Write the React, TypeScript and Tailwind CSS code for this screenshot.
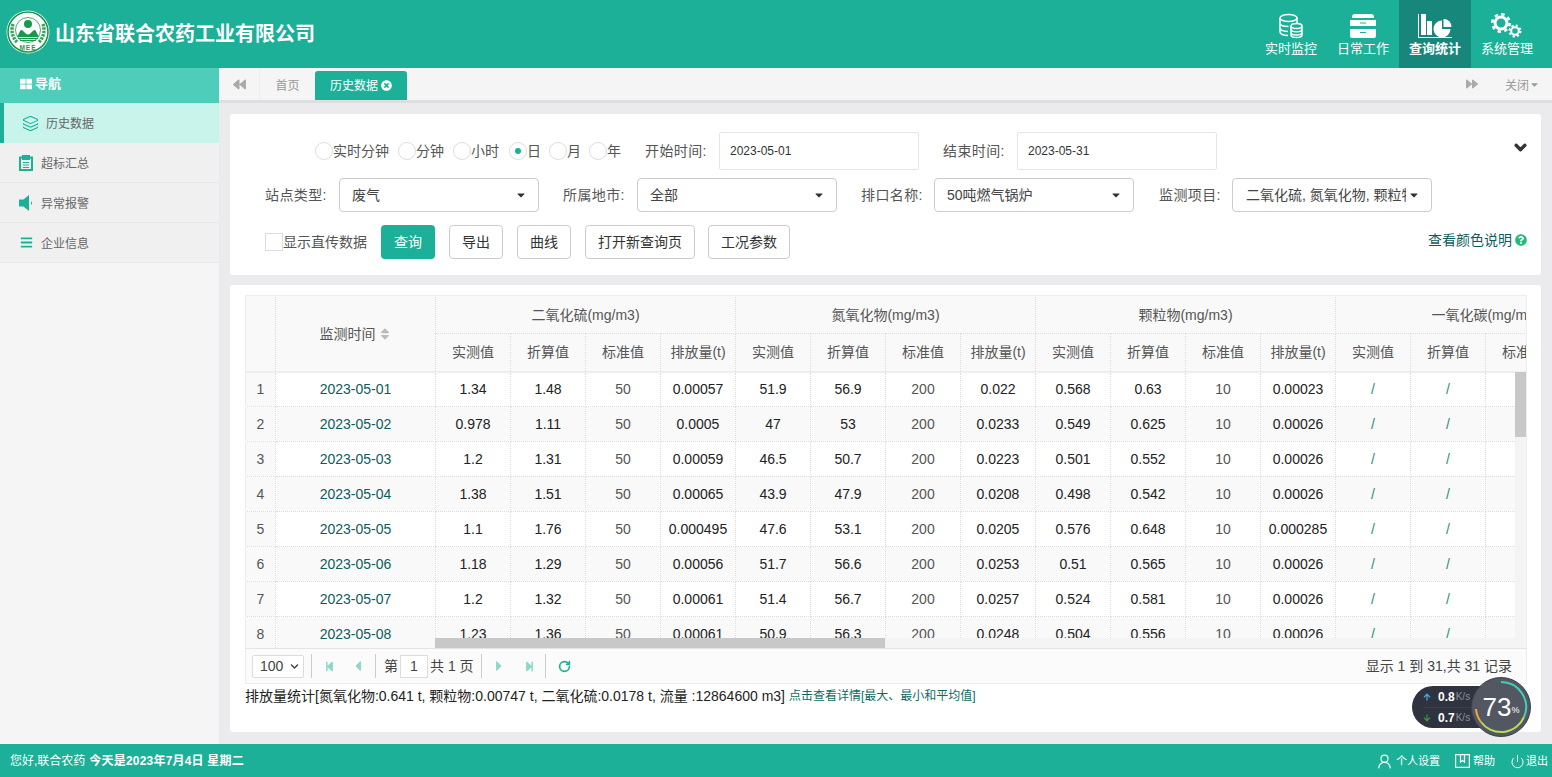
import type { ReactNode } from "react";
import { FaBackward, FaForward, FaCaretDown, FaChevronDown, FaQuestionCircle, FaTimesCircle, FaSort, FaStepBackward, FaStepForward, FaCaretLeft, FaCaretRight, FaBars, FaThLarge, FaArrowUp, FaArrowDown } from "react-icons/fa";
import { RotateCw, Layers, UserRound, Power } from "lucide-react";

const rows = [
  ["2023-05-01", "1.34", "1.48", "0.00057", "51.9", "56.9", "0.022", "0.568", "0.63", "0.00023"],
  ["2023-05-02", "0.978", "1.11", "0.0005", "47", "53", "0.0233", "0.549", "0.625", "0.00026"],
  ["2023-05-03", "1.2", "1.31", "0.00059", "46.5", "50.7", "0.0223", "0.501", "0.552", "0.00026"],
  ["2023-05-04", "1.38", "1.51", "0.00065", "43.9", "47.9", "0.0208", "0.498", "0.542", "0.00026"],
  ["2023-05-05", "1.1", "1.76", "0.000495", "47.6", "53.1", "0.0205", "0.576", "0.648", "0.000285"],
  ["2023-05-06", "1.18", "1.29", "0.00056", "51.7", "56.6", "0.0253", "0.51", "0.565", "0.00026"],
  ["2023-05-07", "1.2", "1.32", "0.00061", "51.4", "56.7", "0.0257", "0.524", "0.581", "0.00026"],
  ["2023-05-08", "1.23", "1.36", "0.00061", "50.9", "56.3", "0.0248", "0.504", "0.556", "0.00026"],
];

const groups = ["二氧化硫(mg/m3)", "氮氧化物(mg/m3)", "颗粒物(mg/m3)", "一氧化碳(mg/m3)"];
const subHeads = ["实测值", "折算值", "标准值", "排放量(t)"];

function Logo() {
  return (
    <svg width="44" height="44" viewBox="0 0 44 44" className="shrink-0 -mt-[4px]">
      <circle cx="22" cy="22" r="21.5" fill="#fff" />
      <circle cx="22" cy="22" r="20" fill="none" stroke="#189a4d" strokeWidth="1.6" />
      <circle cx="22" cy="20" r="12.500" fill="#fff" stroke="#189a4d" strokeWidth="0.8" />
      <path d="M7 14c-2 6-1 13 4 18M37 14c2 6 1 13-4 18" fill="none" stroke="#2aa75c" strokeWidth="3.4" strokeDasharray="2.4 1" />
      <circle cx="22" cy="14" r="4" fill="#189a4d" />
      <path d="M10.500 27c2-1 3-7 5-7s3.500 4.500 6.500 4.500 4.500-4.500 6.500-4.500 3 6 5 7z" fill="#189a4d" />
      <path d="M12 28.500h20M14 30.500h16" stroke="#189a4d" strokeWidth="1" />
      <text x="22" y="39.500" textAnchor="middle" fontSize="6.500" fontWeight="700" fill="#189a4d" letterSpacing="1">MEE</text>
    </svg>
  );
}

function DbIcon() {
  return (
    <svg width="26" height="26" viewBox="0 0 26 26" fill="none" stroke="#fff" strokeWidth="1.500">
      <ellipse cx="10.500" cy="5" rx="8.500" ry="3.500" />
      <path d="M2 5v14c0 2 3.500 3.500 8 3.500M2 10c0 2 3.500 3.500 8.500 3.500M2 15c0 2 3.500 3.300 8 3.400M19 5v5" />
      <ellipse cx="18.500" cy="13" rx="5.500" ry="2.500" fill="#1cb098" />
      <path d="M13 13v9c0 1.400 2.500 2.500 5.500 2.500s5.500-1.100 5.500-2.500v-9M13 16.200c0 1.400 2.500 2.500 5.500 2.500s5.500-1.100 5.500-2.500M13 19.400c0 1.400 2.500 2.500 5.500 2.500s5.500-1.100 5.500-2.500" />
    </svg>
  );
}

function DrawerIcon() {
  return (
    <svg width="26" height="24" viewBox="0 0 26 24" fill="#fff">
      <path d="M5 0h16a3 3 0 0 1 3 3v1H2V3a3 3 0 0 1 3-3z" />
      <path d="M0 6h26v6H0zM10 8.500v1h6v-1z" fillRule="evenodd" />
      <path d="M0 15h26v7a2 2 0 0 1-2 2H2a2 2 0 0 1-2-2zM10 18v1h6v-1z" fillRule="evenodd" />
    </svg>
  );
}

function ChartIcon() {
  return (
    <svg width="34" height="24" viewBox="0 0 34 24" fill="#fff">
      <path d="M0 0h1v23h33v1H0z" />
      <path d="M3 0h5v21H3zM9 7h5v14H9z" />
      <path d="M24 6.500a8.500 8.500 0 1 0 8.500 8.500H24z" />
      <path d="M25.500 5a8 8 0 0 1 8 8h-8z" />
    </svg>
  );
}

function GearsIcon() {
  return (
    <svg width="32" height="26" viewBox="0 0 32 26" fill="none" stroke="#fff">
      <circle cx="10" cy="10" r="6" strokeWidth="3" />
      <circle cx="10" cy="10" r="8.700" strokeWidth="2.600" strokeDasharray="3.400 3.430" />
      <circle cx="24" cy="18" r="3.800" strokeWidth="2" />
      <circle cx="24" cy="18" r="5.500" strokeWidth="2" strokeDasharray="2.160 2.160" />
    </svg>
  );
}

function ClipIcon() {
  return (
    <svg width="14" height="16" viewBox="0 0 14 16" fill="#1cb098">
      <path d="M0 1.500h3V0h8v1.500h3V16H0zM2 3.500V14h10V3.500h-1V5H3V3.500z" fillRule="evenodd" />
      <path d="M4 7h6v1H4zM4 9.500h6v1H4zM4 12h6v1H4z" />
    </svg>
  );
}

function SpeakerIcon() {
  return (
    <svg width="14" height="16" viewBox="0 0 14 16" fill="#1cb098">
      <path d="M0 4.500h4.500L10 0v16l-5.500-4.500H0z" />
      <path d="M12 6a2.500 2.500 0 0 1 0 4z" />
    </svg>
  );
}

function BookIcon() {
  return (
    <svg width="15" height="14" viewBox="0 0 15 14" fill="none" stroke="#fff" strokeWidth="1.200" className="ml-[15px]">
      <path d="M.6.600h13.800v12.800H.6zM5.500.600v7.400l2-1.400 2 1.400V.600" />
    </svg>
  );
}

function NavItem({ label, active, children }: { label: string; active?: boolean; children: ReactNode }) {
  return (
    <div className={active ? "w-[72px] h-full flex flex-col items-center bg-[#16877a] font-bold" : "w-[72px] h-full flex flex-col items-center"}>
      <div className="h-[26px] mt-[13px] flex items-center justify-center">{children}</div>
      <div className="mt-[1px] text-[13px] leading-[18px] text-white">{label}</div>
    </div>
  );
}

function SideItem({ label, children }: { label: string; children: ReactNode }) {
  return (
    <div className="h-[40px] flex items-center pl-[19px] bg-[#f0f0f0] border-b border-[#e8e8e8] text-[12px] text-[#666]">
      <div className="w-[14px] flex justify-center">{children}</div>
      <span className="ml-[8px] mt-[2px]">{label}</span>
    </div>
  );
}

function Radio({ label, checked, gap }: { label: string; checked?: boolean; gap: string }) {
  return (
    <label className={"flex items-center text-[14px] text-[#555] " + gap}>
      <span className="w-[18px] h-[18px] rounded-full border border-[#ddd] bg-white flex items-center justify-center">
        {checked && <span className="w-[6px] h-[6px] rounded-full bg-[#1cb098]" />}
      </span>
      {label}
    </label>
  );
}

function DateBox({ value }: { value: string }) {
  return <div className="w-[200px] h-[38px] border border-[#e6e6e6] rounded-[2px] pl-[10px] flex items-center text-[12px] text-[#333]">{value}</div>;
}

function Select({ value, clip }: { value: string; clip?: boolean }) {
  return (
    <div className={clip ? "w-[200px] h-[34px] border border-[#ccc] rounded-[4px] pl-[13px] pr-[11px] flex items-center justify-between text-[14px] text-[#444] bg-white" : "w-[200px] h-[34px] border border-[#ccc] rounded-[4px] pl-[12px] pr-[11px] flex items-center justify-between text-[14px] text-[#444] bg-white"}>
      <span className={clip ? "overflow-hidden whitespace-nowrap w-[160px]" : "overflow-hidden whitespace-nowrap w-[167px]"}>{value}</span>
      <FaCaretDown className="text-[#333] text-[12px] shrink-0" />
    </div>
  );
}

function Btn({ label, w }: { label: string; w: string }) {
  return <button className={"h-[34px] border border-[#ccc] rounded-[4px] bg-white text-[14px] text-[#333] " + w}>{label}</button>;
}

const label = "text-[14px] text-[#555] tracking-[0.4px]";
const th = "border border-dotted border-[#ddd] bg-[#f9f9f9] font-normal text-[14px] text-[#555] text-center p-0";
const td = "border border-dotted border-[#ddd] text-[14px] text-center p-0 overflow-hidden whitespace-nowrap";

function DataTable() {
  return (
    <div className="relative h-[353px] border border-[#eee] border-b-0 overflow-hidden">
      <table className="table-fixed border-collapse w-[1390px] -ml-px -mt-px">
        <colgroup>
          <col className="w-[30px]" />
          <col className="w-[160px]" />
          {Array.from({ length: 16 }).map((_, i) => (
            <col key={i} className="w-[75px]" />
          ))}
        </colgroup>
        <thead>
          <tr className="h-[38px]">
            <th rowSpan={2} className={th} />
            <th rowSpan={2} className={th + " pt-[2px]"}>
              <span className="inline-flex items-center gap-[2px]">
                监测时间
                <FaSort className="text-[#bbb] text-[14px]" />
              </span>
            </th>
            {groups.map((g) => (
              <th key={g} colSpan={4} className={th + " pt-[2px]"}>{g}</th>
            ))}
          </tr>
          <tr className="h-[38px] border-b-2 border-[#eee]">
            {groups.flatMap((g) =>
              subHeads.map((s) => (
                <th key={g + s} className={th}>{s}</th>
              ))
            )}
          </tr>
        </thead>
        <tbody>
          {rows.map((r, i) => (
            <tr key={r[0]} className={i % 2 === 1 ? "h-[35px] bg-[#f9f9f9]" : "h-[35px] bg-white"}>
              <td className={td + " bg-[#f9f9f9] text-[#555]"}>{i + 1}</td>
              <td className={td + " text-[#0f5c5c]"}>{r[0]}</td>
              <td className={td + " text-[#222]"}>{r[1]}</td>
              <td className={td + " text-[#222]"}>{r[2]}</td>
              <td className={td + " text-[#555]"}>50</td>
              <td className={td + " text-[#222]"}>{r[3]}</td>
              <td className={td + " text-[#222]"}>{r[4]}</td>
              <td className={td + " text-[#222]"}>{r[5]}</td>
              <td className={td + " text-[#555]"}>200</td>
              <td className={td + " text-[#222]"}>{r[6]}</td>
              <td className={td + " text-[#222]"}>{r[7]}</td>
              <td className={td + " text-[#222]"}>{r[8]}</td>
              <td className={td + " text-[#555]"}>10</td>
              <td className={td + " text-[#222]"}>{r[9]}</td>
              <td className={td + " text-[#1f8f7f]"}>/</td>
              <td className={td + " text-[#1f8f7f]"}>/</td>
              <td className={td} />
              <td className={td} />
            </tr>
          ))}
        </tbody>
      </table>
      <div className="absolute right-0 top-[76px] bottom-0 w-[11px] bg-[#f4f4f4]">
        <div className="h-[65px] bg-[#c8c8c8]" />
      </div>
      <div className="absolute left-[189px] right-[11px] bottom-0 h-[10px] bg-[#f4f4f4]">
        <div className="w-[450px] h-full bg-[#c8c8c8]" />
      </div>
    </div>
  );
}

function Pager() {
  return (
    <div className="h-[36px] border border-[#eee] border-t-[#e4e4e4] bg-[#fbfbfb] flex items-center text-[14px] text-[#444]">
      <div className="ml-[6px] w-[52px] h-[23px] border border-[#ddd] rounded-[2px] bg-white flex items-center justify-between pl-[7px] pr-[4px]">
        100
        <FaChevronDown className="text-[9px] text-[#444]" />
      </div>
      <span className="ml-[7px] w-px h-[24px] bg-[#ccc]" />
      <FaStepBackward className="ml-[12px] text-[#8fd8c9] text-[11px]" />
      <FaCaretLeft className="ml-[15px] text-[#8fd8c9] text-[16px]" />
      <span className="ml-[9px] w-px h-[24px] bg-[#ccc]" />
      <span className="ml-[8px]">第</span>
      <div className="ml-[2px] w-[28px] h-[23px] border border-[#ddd] bg-white flex items-center justify-center">1</div>
      <span className="ml-[2px]">共 1 页</span>
      <span className="ml-[7px] w-px h-[24px] bg-[#ccc]" />
      <FaCaretRight className="ml-[9px] text-[#8fd8c9] text-[16px]" />
      <FaStepForward className="ml-[17px] text-[#8fd8c9] text-[11px]" />
      <span className="ml-[10px] w-px h-[24px] bg-[#ccc]" />
      <RotateCw size={13} strokeWidth={3} className="ml-[12px] text-[#1cb098]" />
      <span className="ml-auto mr-[14px]">显示 1 到 31,共 31 记录</span>
    </div>
  );
}

function SpeedBadge() {
  return (
    <div className="absolute left-[1193px] top-[609px] w-[120px] h-[60px] flex items-center">
      <div className="w-[89px] h-[42px] rounded-l-[21px] bg-[#2f3340] text-white flex flex-col justify-center pl-[11px] text-[12px] font-bold leading-[20px]">
        <div className="flex items-center border-b border-[#3b404d]">
          <FaArrowUp className="text-[#4aa8e0] text-[8px]" />
          <span className="ml-[7px]">0.8</span>
          <span className="ml-[1px] text-[10px] font-normal text-[#8a8e99]">K/s</span>
        </div>
        <div className="flex items-center">
          <FaArrowDown className="text-[#3a9a3a] text-[8px]" />
          <span className="ml-[7px]">0.7</span>
          <span className="ml-[1px] text-[10px] font-normal text-[#8a8e99]">K/s</span>
        </div>
      </div>
      <div className="relative -ml-[30px] w-[60px] h-[60px] rounded-full bg-[#535762] border border-[#3c404b] flex items-center justify-center text-white">
        <svg width="58" height="58" viewBox="0 0 58 58" className="absolute left-0 top-0" fill="none" strokeWidth="2">
          <path d="M29 4a25 25 0 0 1 23 35" stroke="#3fd3b4" />
          <path d="M52 39a25 25 0 0 1-43 5" stroke="#b9dc5a" />
          <path d="M9 44a25 25 0 0 1-5-13" stroke="#f0a93a" />
        </svg>
        <span className="text-[26px] font-light leading-none">73</span>
        <span className="text-[9px] mt-[8px]">%</span>
      </div>
    </div>
  );
}

export default function App() {
  return (
    <div className="w-[1552px] h-[777px] overflow-hidden flex flex-col bg-[#ebebed] [font-family:'Liberation_Sans','Noto_Sans_CJK_SC',sans-serif]">
      <header className="h-[68px] shrink-0 bg-[#1cb098] flex items-center pl-[6px] pr-[9px]">
        <Logo />
        <h1 className="ml-[5px] text-[20px] font-bold text-white">山东省联合农药工业有限公司</h1>
        <nav className="ml-auto h-full flex">
          <NavItem label="实时监控"><DbIcon /></NavItem>
          <NavItem label="日常工作"><DrawerIcon /></NavItem>
          <NavItem label="查询统计" active><ChartIcon /></NavItem>
          <NavItem label="系统管理"><GearsIcon /></NavItem>
        </nav>
      </header>

      <div className="flex-1 flex min-h-0">
        <aside className="w-[219px] shrink-0 bg-[#f5f5f5]">
          <div className="h-[35px] bg-[#4dcdba] flex items-center pl-[20px] pb-[3px] text-[13px] font-bold text-white">
            <FaThLarge className="text-[12px]" />
            <span className="ml-[3px]">导航</span>
          </div>
          <div className="h-[40px] flex items-center pl-[18px] bg-[#c8f4ec] border-l-4 border-[#1cb098] text-[12px] text-[#666]">
            <Layers size={17} strokeWidth={1.500} className="text-[#1cb098]" />
            <span className="ml-[7px] mt-[2px]">历史数据</span>
          </div>
          <SideItem label="超标汇总"><ClipIcon /></SideItem>
          <SideItem label="异常报警"><SpeakerIcon /></SideItem>
          <SideItem label="企业信息"><FaBars className="text-[#1cb098] text-[13px]" /></SideItem>
        </aside>

        <main className="relative flex-1 flex flex-col min-w-0">
          <div className="h-[35px] shrink-0 bg-[#f5f5f5] border-b-[3px] border-[#dedede] flex items-end text-[12px]">
            <div className="w-[41px] h-full flex items-center justify-center border-r border-[#eee]">
              <FaBackward className="text-[#aaa] text-[13px]" />
            </div>
            <div className="w-[55px] h-full pt-[3px] flex items-center justify-center text-[#999]">首页</div>
            <div className="w-[92px] h-[29px] rounded-t-[3px] bg-[#1cb098] text-white flex items-center justify-center gap-[3px]">
              历史数据
              <FaTimesCircle className="text-[11px]" />
            </div>
            <div className="ml-auto h-full flex items-center text-[#999]">
              <FaForward className="text-[#aaa] text-[12px]" />
              <span className="ml-[27px] mt-[3px]">关闭</span>
              <FaCaretDown className="mr-[12px] text-[11px]" />
            </div>
          </div>

          <section className="mx-[11px] mt-[11px] h-[161px] shrink-0 bg-white rounded-[3px] pl-[35px] pr-[14px] pt-[18px] flex flex-col">
            <div className="flex items-center h-[38px]">
              <div className="w-[50px]" />
              <Radio label="实时分钟" gap="mr-[9px]" />
              <Radio label="分钟" gap="mr-[9px]" />
              <Radio label="小时" gap="mr-[10px]" />
              <Radio label="日" checked gap="mr-[8px]" />
              <Radio label="月" gap="mr-[8px]" />
              <Radio label="年" gap="mr-[24px]" />
              <span className={label + " w-[74px]"}>开始时间:</span>
              <DateBox value="2023-05-01" />
              <span className={label + " ml-[24px] w-[74px]"}>结束时间:</span>
              <DateBox value="2023-05-31" />
              <FaChevronDown className="ml-auto -mt-[8px] text-[13px] text-[#333] [stroke-width:50px]" />
            </div>
            <div className="flex items-center h-[34px] mt-[8px]">
              <span className={label + " w-[74px]"}>站点类型:</span>
              <Select value="废气" />
              <span className={label + " ml-[24px] w-[74px]"}>所属地市:</span>
              <Select value="全部" />
              <span className={label + " ml-[24px] w-[73px]"}>排口名称:</span>
              <Select value="50吨燃气锅炉" />
              <span className={label + " ml-[25px] w-[73px]"}>监测项目:</span>
              <Select value="二氧化硫, 氮氧化物, 颗粒物, 一氧化碳" clip />
            </div>
            <div className="flex items-center h-[34px] mt-[13px]">
              <span className="w-[18px] h-[18px] border border-[#ddd] bg-white" />
              <span className="text-[14px] text-[#555] w-[98px]">显示直传数据</span>
              <button className="w-[54px] h-[34px] rounded-[4px] bg-[#1cb098] text-[14px] text-white">查询</button>
              <div className="ml-[14px] flex gap-[14px]">
                <Btn label="导出" w="w-[54px]" />
                <Btn label="曲线" w="w-[54px]" />
                <Btn label="打开新查询页" w="w-[110px]" />
              </div>
              <Btn label="工况参数" w="ml-[13px] w-[82px]" />
              <span className="ml-auto -mt-[4px] text-[14px] text-[#0f5c5c]">查看颜色说明</span>
              <FaQuestionCircle className="ml-[3px] -mt-[4px] text-[#22bb77] text-[12px]" />
            </div>
          </section>

          <section className="mx-[11px] mt-[10px] mb-[12px] flex-1 bg-white rounded-[3px] pl-[15px] pr-[14px] pt-[10px]">
            <DataTable />
            <Pager />
            <div className="mt-[2px] h-[20px] flex items-center whitespace-nowrap text-[14px] text-[#222]">
              排放量统计[氮氧化物:0.641 t, 颗粒物:0.00747 t, 二氧化硫:0.0178 t, 流量 :12864600 m3]
              <span className="ml-[4px] text-[12px] text-[#0f6b5f]">点击查看详情[最大、最小和平均值]</span>
            </div>
          </section>

          <SpeedBadge />
        </main>
      </div>

      <footer className="h-[33px] shrink-0 bg-[#1cb098] flex items-center pt-[1px] pl-[10px] pr-[4px] text-[12px] text-white">
        <span>您好,联合农药</span>
        <span className="ml-[4px] font-bold tracking-[0.2px]">今天是2023年7月4日 星期二</span>
        <div className="ml-auto flex items-center text-[11px]">
          <UserRound size={17} strokeWidth={1.500} />
          <span className="ml-[3px]">个人设置</span>
          <BookIcon />
          <span className="ml-[3px]">帮助</span>
          <Power size={15} strokeWidth={1.500} className="ml-[15px]" />
          <span className="ml-[1px]">退出</span>
        </div>
      </footer>
    </div>
  );
}
